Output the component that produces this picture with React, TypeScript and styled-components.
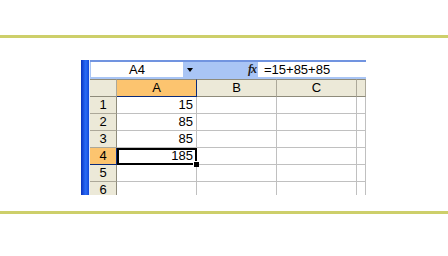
import React from "react";
import styled, { createGlobalStyle } from "styled-components";

const GlobalStyle = createGlobalStyle`
	html, body {
		margin: 0;
		padding: 0;
		background: #ffffff;
	}
	body {
		font-family: "Liberation Sans", Arial, sans-serif;
	}
`;

const Page = styled.div`
	width: 448px;
	height: 256px;
	display: flex;
	flex-direction: column;
	padding-top: 35px;
	box-sizing: border-box;
	overflow: hidden;
`;

const Rule = styled.div`
	height: 3px;
	background: #cdcf6a;
	flex-shrink: 0;
`;

const Stage = styled.div`
	height: 173px;
	padding: 22px 0 0 81px;
	box-sizing: border-box;
`;

const Window = styled.div`
	display: flex;
	width: 285px;
	height: 135px;
	overflow: hidden;
`;

const FrameEdge = styled.div`
	width: 8px;
	flex-shrink: 0;
	background: linear-gradient(90deg, #0b32b8 0%, #1d56e6 35%, #2b6cf4 60%, #1448d8 100%);
`;

const Seam = styled.div`
	width: 1px;
	flex-shrink: 0;
	background: #e4ecfa;
`;

const Sheet = styled.div`
	display: flex;
	flex-direction: column;
	width: 276px;
	font-size: 13px;
	color: #000;
`;

const FormulaBar = styled.div`
	display: flex;
	height: 19px;
	box-sizing: border-box;
	border-top: 2px solid #7194e0;
	padding-bottom: 2px;
	background: #a9c5f5;
`;

const NameBox = styled.div`
	margin-left: 1px;
	width: 92px;
	background: #ffffff;
	display: flex;
	align-items: center;
	justify-content: center;
	line-height: 15px;
`;

const DropButton = styled.div`
	width: 17px;
	display: flex;
	align-items: center;
	justify-content: center;

	&::before {
		content: "";
		border-left: 3px solid transparent;
		border-right: 3px solid transparent;
		border-top: 4px solid #000;
		margin-right: 4px;
	}
`;

const FxArea = styled.div`
	flex: 1;
	display: flex;
	align-items: center;
	justify-content: flex-end;
	padding-right: 2px;
`;

const FxMark = styled.span`
	font-family: "Liberation Serif", "Times New Roman", serif;
	font-style: italic;
	font-weight: bold;
	font-size: 12px;
	letter-spacing: -1px;
	color: #1a1a1a;
`;

const FormulaInput = styled.div`
	width: 108px;
	background: #ffffff;
	padding-left: 6px;
	box-sizing: border-box;
	display: flex;
	align-items: center;
	line-height: 15px;
`;

const Grid = styled.div`
	display: grid;
	grid-template-columns: 27px 80px 80px 80px 9px;
	grid-template-rows: 18px repeat(6, 17px);
`;

const Cell = styled.div<{ $align?: "left" | "right" }>`
	position: relative;
	box-sizing: border-box;
	border-right: 1px solid #c0c0c0;
	border-bottom: 1px solid #c0c0c0;
	background: #ffffff;
	display: flex;
	align-items: center;
	justify-content: ${(p) => (p.$align === "right" ? "flex-end" : "flex-start")};
	padding: 0 3px 0 2px;
	line-height: 16px;
	white-space: nowrap;
	overflow: visible;
`;

const ActiveCell = styled(Cell)`
	&::after {
		content: "";
		position: absolute;
		top: 0;
		left: 0;
		right: -1px;
		bottom: -1px;
		border: 2px solid #000;
		z-index: 1;
	}
	&::before {
		content: "";
		position: absolute;
		width: 6px;
		height: 6px;
		right: -3px;
		bottom: -3px;
		background: #000;
		border-left: 1px solid #fff;
		border-top: 1px solid #fff;
		box-sizing: border-box;
		z-index: 2;
	}
`;

const ColHead = styled.div<{ $selected?: boolean }>`
	box-sizing: border-box;
	border-top: 1px solid #8e8b7b;
	border-right: 1px solid ${(p) => (p.$selected ? "#0a2a7a" : "#aca899")};
	border-bottom: 1px solid ${(p) => (p.$selected ? "#0a2a7a" : "#8e8b7b")};
	background: ${(p) => (p.$selected ? "#fcc46f" : "#ece9d8")};
	display: flex;
	align-items: center;
	justify-content: center;
	line-height: 16px;
`;

const RowHead = styled.div<{ $selected?: boolean }>`
	box-sizing: border-box;
	border-right: 1px solid ${(p) => (p.$selected ? "#0a2a7a" : "#8e8b7b")};
	border-bottom: 1px solid ${(p) => (p.$selected ? "#0a2a7a" : "#aca899")};
	background: ${(p) => (p.$selected ? "#fcc46f" : "#ece9d8")};
	display: flex;
	align-items: center;
	justify-content: center;
	line-height: 16px;
`;

const values = ["15", "85", "85", "185", "", ""];

const App = (): JSX.Element => {
	return (
		<>
			<GlobalStyle />
			<Page>
				<Rule />
				<Stage>
					<Window>
						<FrameEdge />
						<Seam />
						<Sheet>
							<FormulaBar>
								<NameBox>A4</NameBox>
								<DropButton />
								<FxArea>
									<FxMark>fx</FxMark>
								</FxArea>
								<FormulaInput>=15+85+85</FormulaInput>
							</FormulaBar>
							<Grid>
								<ColHead />
								<ColHead $selected>A</ColHead>
								<ColHead>B</ColHead>
								<ColHead>C</ColHead>
								<ColHead />
								{values.map((v, i) => {
									const row = i + 1;
									const active = row === 4;
									const ACell = active ? ActiveCell : Cell;
									return (
										<React.Fragment key={row}>
											<RowHead $selected={active}>{row}</RowHead>
											<ACell $align="right">{v}</ACell>
											<Cell />
											<Cell />
											<Cell />
										</React.Fragment>
									);
								})}
							</Grid>
						</Sheet>
					</Window>
				</Stage>
				<Rule />
			</Page>
		</>
	);
};

export default App;
